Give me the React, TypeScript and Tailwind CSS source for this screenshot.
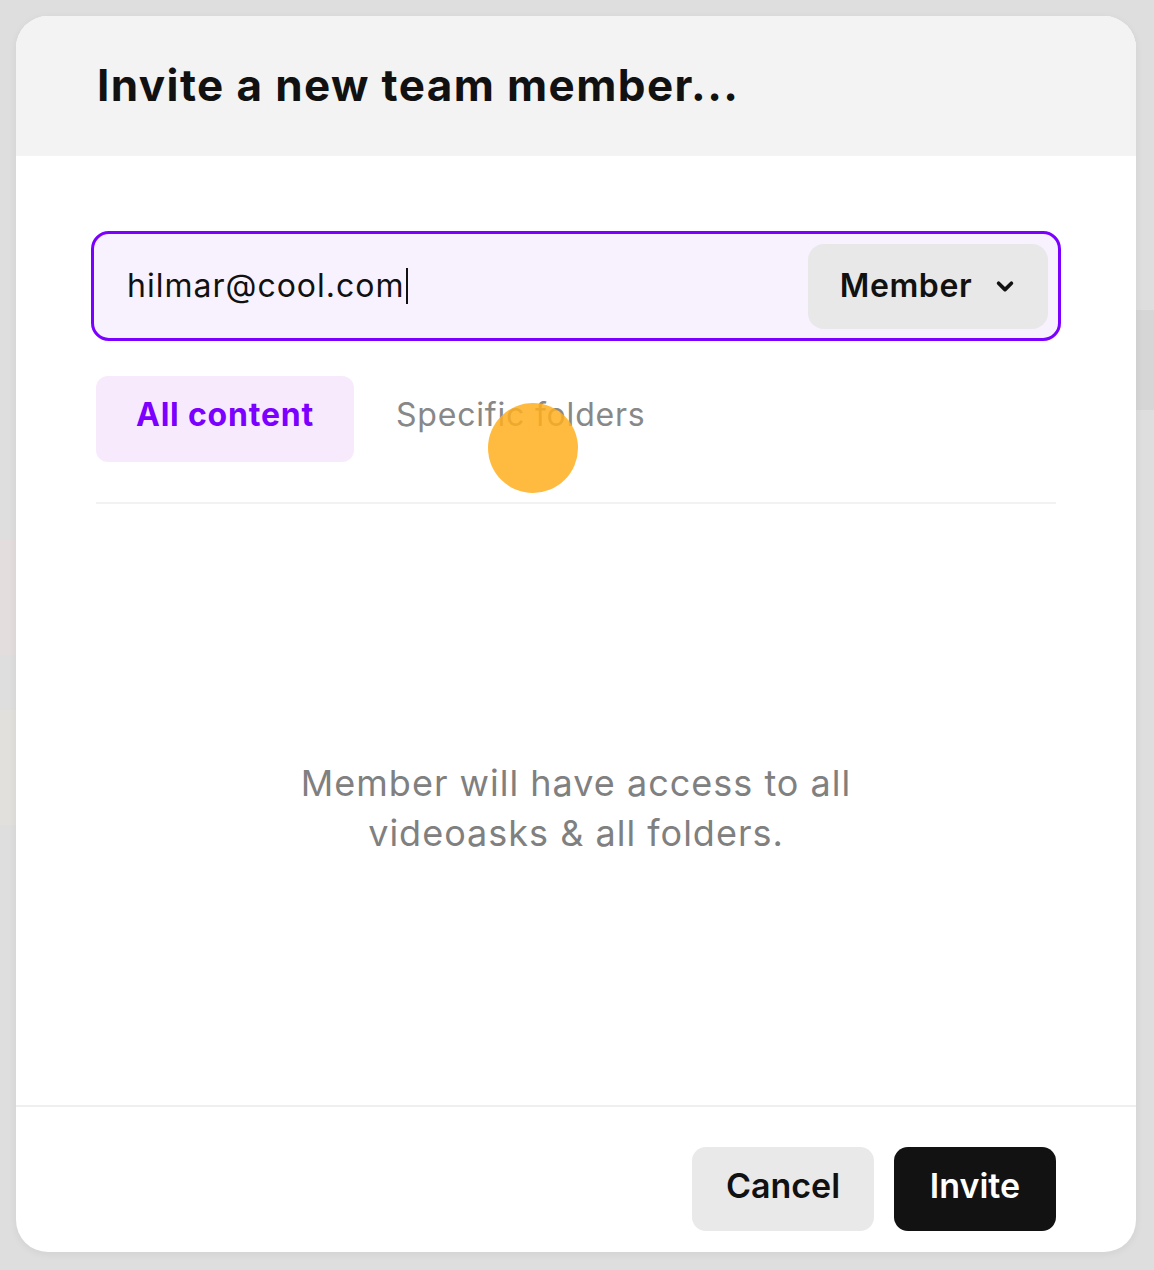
import React from 'react';

const font = { fontFamily: 'Inter, "Noto Sans", sans-serif' };

export default function App() {
  return (
    <div className="relative w-[1154px] h-[1270px] bg-[#dedede] overflow-hidden" style={font}>
      {/* faint page behind the modal */}
      <div className="absolute left-0 top-[540px] w-[60px] h-[115px] rounded-r-[40px] bg-[#e3dedd]" />
      <div className="absolute left-0 top-[710px] w-[60px] h-[115px] bg-[#e2e0dc]" />
      <div className="absolute right-0 top-[310px] w-[40px] h-[100px] bg-[#d6d6d6]" />

      <div className="absolute left-[16px] top-[16px] w-[1120px] h-[1236px] flex flex-col rounded-[32px] bg-white overflow-hidden shadow-[0_2px_8px_rgba(0,0,0,0.06)]">
        {/* Header */}
        <div className="h-[140px] shrink-0 bg-[#f3f3f3] flex items-center pl-[81px]">
          <h1 className="text-[44px] font-bold tracking-[1.4px] text-[#111] leading-none pb-[2px]">
            Invite a new team member...
          </h1>
        </div>

        {/* Body */}
        <div className="flex-1 flex flex-col px-[80px] pt-[75px]">
          <div className="flex items-center h-[110px] -mx-[5px] rounded-[18px] border-[3px] border-[#7b00ff] bg-[#f7f2fe] pl-[33px] pr-[10px]">
            <div className="flex-1 flex items-center text-[32px] tracking-[1px] text-[#111]">
              <span>hilmar@cool.com</span>
              <span className="w-[2px] h-[36px] bg-[#111] ml-[1px]" />
            </div>
            <button className="h-[85px] w-[240px] flex items-center justify-center gap-[22px] rounded-[16px] bg-[#e8e8e8] text-[32px] font-semibold tracking-[0.6px] text-[#111]">
              <span>Member</span>
              <svg width="22" height="22" viewBox="0 0 24 24" fill="none" stroke="#111" strokeWidth="4" strokeLinecap="round" strokeLinejoin="round">
                <path d="M5 9l7 7 7-7" />
              </svg>
            </button>
          </div>

          <div className="flex items-center gap-[42px] mt-[35px] pb-[40px] border-b-2 border-[#f2f2f2]">
            <div className="h-[86px] w-[258px] flex items-center justify-center pb-[8px] rounded-[12px] bg-[#f7eafd] text-[32px] font-bold tracking-[0.8px] text-[#7b00ff]">
              All content
            </div>
            <div className="text-[32px] tracking-[0.8px] text-[#888] pb-[8px]">Specific folders</div>
          </div>

          <div className="flex-1 flex items-center justify-center pt-[6px]">
            <p className="text-[36px] leading-[50px] tracking-[1px] text-[#808080] text-center">
              Member will have access to all
              <br />
              videoasks &amp; all folders.
            </p>
          </div>
        </div>

        {/* Footer */}
        <div className="h-[147px] shrink-0 border-t-2 border-[#efefef] flex items-start justify-end gap-[20px] pt-[40px] pr-[80px]">
          <button className="h-[84px] w-[182px] pb-[8px] rounded-[14px] bg-[#e9e9e9] text-[34px] font-semibold text-[#111]">
            Cancel
          </button>
          <button className="h-[84px] w-[162px] pb-[8px] rounded-[14px] bg-[#121212] text-[34px] font-semibold text-white">
            Invite
          </button>
        </div>
      </div>

      {/* touch indicator */}
      <div className="absolute left-[488px] top-[403px] w-[90px] h-[90px] rounded-full bg-[#ffaf1f]/85" />
    </div>
  );
}
